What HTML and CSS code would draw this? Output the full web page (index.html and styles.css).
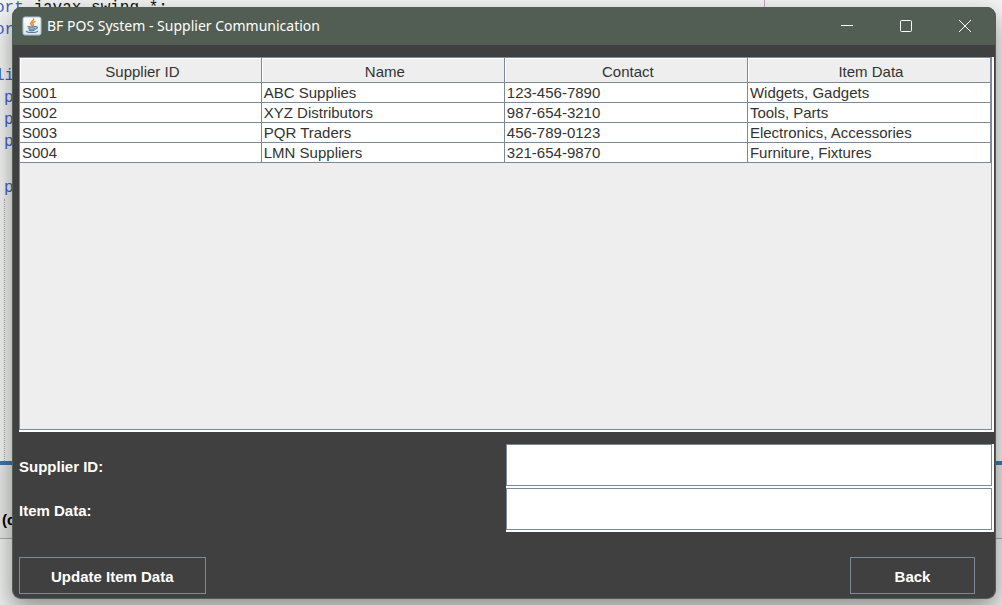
FILE: index.html
```html
<!DOCTYPE html>
<html lang="en">
<head>
<meta charset="utf-8">
<title>BF POS System - Supplier Communication</title>
<link rel="stylesheet" href="styles.css">
</head>
<body>
<div class="editor">
  <div class="code">
    <div class="line"><span class="keyword">ort</span> javax.swing.*;</div>
    <div class="line keyword">ort</div>
    <div class="line"></div>
    <div class="line keyword">lic</div>
    <div class="line keyword indent">p</div>
    <div class="line keyword indent">p</div>
    <div class="line keyword indent">p</div>
    <div class="line"></div>
    <div class="line keyword indent">p</div>
    <div class="guide"></div>
  </div>
  <div class="output">(c</div>
  <div class="status"></div>
  <div class="margin-line"></div>
</div>
<main class="window">
  <header class="titlebar">
    <svg class="java" viewBox="0 0 20 20" aria-hidden="true">
      <defs><linearGradient id="tile" x1="0" y1="0" x2="0" y2="1"><stop offset="0" stop-color="#fff"/><stop offset="1" stop-color="#dce4ea"/></linearGradient></defs>
      <rect x="1" y="1" width="18" height="18" rx="2" fill="url(#tile)" stroke="#a9c0d0"/>
      <path d="M11.6 3c.6 2.2-4.2 3-2.500 5.600L10 10M12.800 5.600c-2.600 1-2.300 2-1.400 3.200.3.600 0 1-.5 1.300" fill="none" stroke="#e8893a" stroke-width="1.500" stroke-linecap="round"/>
      <path d="M6 10.600c1.400.7 5.600.7 7.300 0M6.800 12.600c1.600.7 4.200.7 6 0M7.400 14.300c1.400.6 3.500.6 4.800 0M13.600 10.600c2.300-.5 2.400 1.700-.2 2.500M4.500 15.400c1 1.500 9.500 1.500 11-.1" fill="none" stroke="#537c9d" stroke-width="1.200" stroke-linecap="round"/>
    </svg>
    <h1 class="title">BF POS System - Supplier Communication</h1>
    <div class="controls">
      <button class="control" type="button" aria-label="Minimize"><svg class="glyph" viewBox="0 0 14 14"><path d="M1 6.500h12"/></svg></button>
      <button class="control" type="button" aria-label="Maximize"><svg class="glyph" viewBox="0 0 14 14"><rect x="1.500" y="1.500" width="11" height="11" rx="1"/></svg></button>
      <button class="control" type="button" aria-label="Close"><svg class="glyph" viewBox="0 0 14 14"><path d="M1 1l12 12M13 1L1 13"/></svg></button>
    </div>
  </header>
  <div class="content">
    <div class="etched pane">
      <div class="viewport">
        <table class="suppliers">
          <thead><tr><th>Supplier ID</th><th>Name</th><th>Contact</th><th>Item Data</th></tr></thead>
          <tbody>
            <tr><td>S001</td><td>ABC Supplies</td><td>123-456-7890</td><td>Widgets, Gadgets</td></tr>
            <tr><td>S002</td><td>XYZ Distributors</td><td>987-654-3210</td><td>Tools, Parts</td></tr>
            <tr><td>S003</td><td>PQR Traders</td><td>456-789-0123</td><td>Electronics, Accessories</td></tr>
            <tr><td>S004</td><td>LMN Suppliers</td><td>321-654-9870</td><td>Furniture, Fixtures</td></tr>
          </tbody>
        </table>
      </div>
    </div>
    <form class="form">
      <label class="label" for="supplier-id">Supplier ID:</label>
      <div class="etched"><input class="field" id="supplier-id" type="text"></div>
      <label class="label" for="item-data">Item Data:</label>
      <div class="etched"><input class="field" id="item-data" type="text"></div>
    </form>
    <div class="actions">
      <button class="action" type="button">Update Item Data</button>
      <button class="action" type="button">Back</button>
    </div>
  </div>
</main>
</body>
</html>
```
FILE: styles.css
```css
* { box-sizing: border-box; }

body {
  margin: 0;
  min-height: 100vh;
  display: flex;
  overflow: hidden;
  background: #ededed;
  font-family: "Liberation Sans", Arial, sans-serif;
  font-size: 15px;
}

/* Editor behind the window */
.editor {
  position: absolute;
  inset: 0;
  overflow: hidden;
  display: flex;
  flex-direction: column;
}
.code {
  flex: 1;
  display: flex;
  flex-direction: column;
  margin-left: -5px;
  background: #f2f2f2;
  border-bottom: 4px solid #3a74b4;
  font: 16px/22px "Courier New", "Liberation Mono", monospace;
  color: #111;
}
.line { min-height: 22px; white-space: pre; }
.line:first-child { margin-top: -3px; }
.line:empty { min-height: 24px; }
.keyword { color: #3f62c8; }
.indent { padding-left: 9px; }
.guide {
  flex: 1;
  margin-left: 9px;
  border-left: 1px dotted #aaa;
}
.output {
  height: 74px;
  padding: 46px 0 0 2px;
  background: #e6e6e6;
  border-bottom: 1px solid #aaa;
  font-weight: bold;
  color: #000;
}
.status { height: 66px; background: #ededed; }
.margin-line {
  position: absolute;
  top: 0;
  left: 764px;
  width: 1px;
  height: 460px;
  background: #c9a3c4;
}

/* Window */
.window {
  position: relative;
  flex: 1;
  display: flex;
  flex-direction: column;
  margin: 7px 6px 6px 12px;
  overflow: hidden;
  background: #404040;
  border-radius: 9px;
  border: 1px solid #525e53;
  border-top: 0;
  box-shadow: 0 10px 24px rgba(0, 0, 0, 0.4);
}
.titlebar {
  height: 38px;
  display: flex;
  align-items: center;
  gap: 5px;
  padding: 0 1px 0 9px;
  background: #525e53;
  color: #fff;
}
.java { width: 20px; height: 20px; }
.title {
  flex: 1;
  margin: 0;
  font: 14px/20px "Noto Sans", "Open Sans", sans-serif;
}
.controls { display: flex; }
.control {
  width: 59px;
  height: 38px;
  padding: 0;
  display: grid;
  place-items: center;
  border: 0;
  background: none;
}
.glyph {
  width: 14px;
  height: 14px;
  fill: none;
  stroke: #fff;
}

.content {
  flex: 1;
  display: flex;
  flex-direction: column;
  padding: 12px 1px 4px 6px;
}
.etched {
  display: flex;
  padding: 0 2px 2px 0;
  background: #fff;
}
.pane { flex: 1; }
.viewport {
  flex: 1;
  background: #eee;
  border: 1px solid #7a8a99;
}
.suppliers {
  width: 100%;
  table-layout: fixed;
  border-spacing: 0;
  color: #333;
  line-height: 19px;
}
.suppliers th {
  height: 25px;
  padding: 3px 0 1px 4px;
  font-weight: normal;
  background: #eee;
  border-right: 1px solid #7a8a99;
  border-bottom: 1px solid #7a8a99;
  box-shadow: inset 1px 1px #fff;
}
.suppliers th:first-child { width: 24.9%; }
.suppliers td {
  height: 20px;
  padding: 0 2px;
  background: #fff;
  border-right: 1px solid #7a8a99;
  border-bottom: 1px solid #7a8a99;
}

.form {
  display: grid;
  grid-template-columns: 487fr 488fr;
  grid-auto-rows: 44px;
  margin-top: 12px;
}
.label {
  align-self: center;
  color: #fff;
  font-weight: bold;
}
.field {
  width: 100%;
  padding: 0 4px;
  border: 1px solid #7a8a99;
  background: #fff;
  font: inherit;
}

.actions {
  display: flex;
  justify-content: space-between;
  margin-top: 25px;
  padding-right: 19px;
}
.action {
  height: 37px;
  padding: 2px 31px 0;
  min-width: 125px;
  border: 1px solid #7a8a99;
  background: #404040;
  color: #fff;
  font: bold 15px/20px "Liberation Sans", Arial, sans-serif;
}
```
